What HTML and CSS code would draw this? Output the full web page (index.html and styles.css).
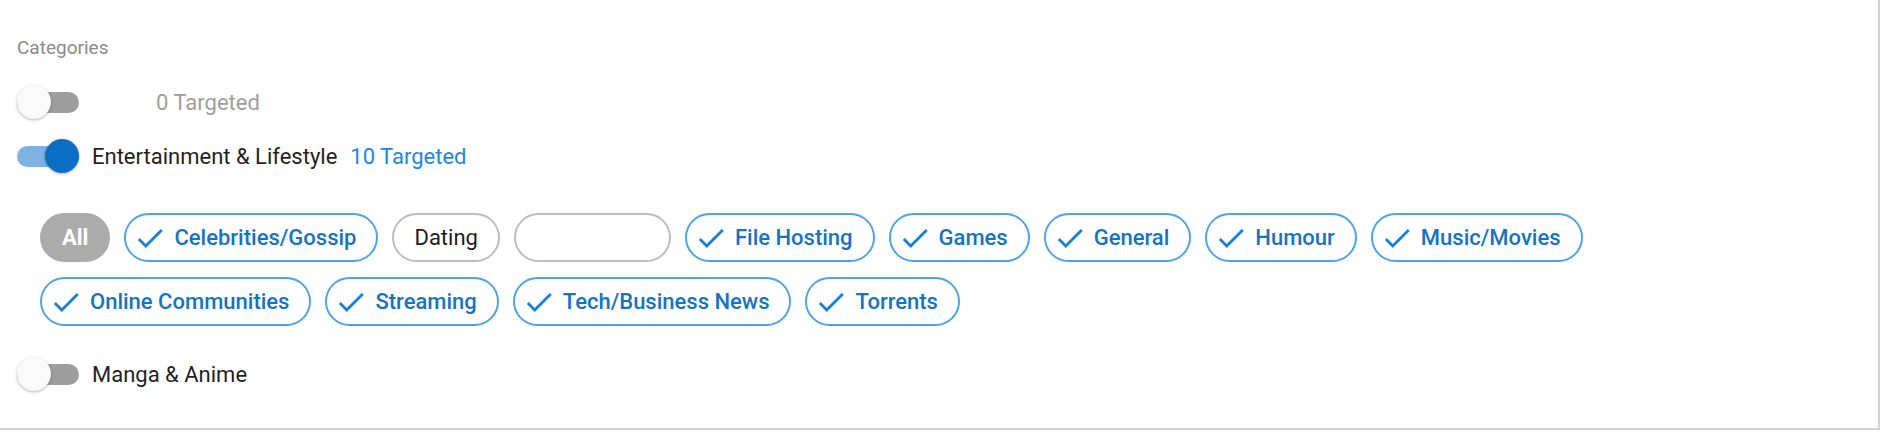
FILE: index.html
```html
<!DOCTYPE html>
<html lang="en">
<head>
    <meta charset="UTF-8">
    <meta name="viewport" content="width=device-width, initial-scale=1.0">
    <title>Categories</title>
    <link rel="stylesheet" href="styles.css">
</head>
<body>
    <div class="panel">
        <div class="caption">Categories</div>

        <div class="category">
            <span class="switch"><span class="thumb"></span></span>
            <span class="name name-empty"></span>
            <span class="count">0 Targeted</span>
        </div>

        <div class="category">
            <span class="switch on"><span class="thumb"></span></span>
            <span class="name">Entertainment &amp; Lifestyle</span>
            <span class="count active">10 Targeted</span>
        </div>

        <div class="chips">
            <span class="chip chip-all">All</span>
            <span class="chip checked"><svg viewBox="0 0 24 24"><path d="M9 16.17L4.83 12l-1.42 1.41L9 19 21 7l-1.41-1.41z"/></svg>Celebrities/Gossip</span>
            <span class="chip">Dating</span>
            <span class="chip chip-empty"></span>
            <span class="chip checked"><svg viewBox="0 0 24 24"><path d="M9 16.17L4.83 12l-1.42 1.41L9 19 21 7l-1.41-1.41z"/></svg>File Hosting</span>
            <span class="chip checked"><svg viewBox="0 0 24 24"><path d="M9 16.17L4.83 12l-1.42 1.41L9 19 21 7l-1.41-1.41z"/></svg>Games</span>
            <span class="chip checked"><svg viewBox="0 0 24 24"><path d="M9 16.17L4.83 12l-1.42 1.41L9 19 21 7l-1.41-1.41z"/></svg>General</span>
            <span class="chip checked"><svg viewBox="0 0 24 24"><path d="M9 16.17L4.83 12l-1.42 1.41L9 19 21 7l-1.41-1.41z"/></svg>Humour</span>
            <span class="chip checked"><svg viewBox="0 0 24 24"><path d="M9 16.17L4.83 12l-1.42 1.41L9 19 21 7l-1.41-1.41z"/></svg>Music/Movies</span>
            <span class="chip checked"><svg viewBox="0 0 24 24"><path d="M9 16.17L4.83 12l-1.42 1.41L9 19 21 7l-1.41-1.41z"/></svg>Online Communities</span>
            <span class="chip checked"><svg viewBox="0 0 24 24"><path d="M9 16.17L4.83 12l-1.42 1.41L9 19 21 7l-1.41-1.41z"/></svg>Streaming</span>
            <span class="chip checked"><svg viewBox="0 0 24 24"><path d="M9 16.17L4.83 12l-1.42 1.41L9 19 21 7l-1.41-1.41z"/></svg>Tech/Business News</span>
            <span class="chip checked"><svg viewBox="0 0 24 24"><path d="M9 16.17L4.83 12l-1.42 1.41L9 19 21 7l-1.41-1.41z"/></svg>Torrents</span>
        </div>

        <div class="category last">
            <span class="switch"><span class="thumb"></span></span>
            <span class="name">Manga &amp; Anime</span>
        </div>
    </div>
</body>
</html>
```

FILE: styles.css
```css
body {
    margin: 0;
    padding: 0;
    background: #fff;
    font-family: Roboto, 'Liberation Sans', sans-serif;
}

.panel {
    width: 1880px;
    height: 430px;
    box-sizing: border-box;
    padding: 36px 0 0 17px;
    border-right: 2px solid #d2d2d2;
    border-bottom: 2px solid #d2d2d2;
}

.caption {
    font-size: 19px;
    line-height: 24px;
    color: #8a8a8a;
    margin-bottom: 22px;
}

.category {
    display: flex;
    align-items: center;
    height: 40px;
    gap: 13px;
    margin-bottom: 14px;
    font-size: 22px;
}

.category.last {
    margin-top: 28px;
}

.switch {
    position: relative;
    display: flex;
    align-items: center;
    width: 62px;
    height: 40px;
}

.switch::before {
    content: '';
    width: 62px;
    height: 21px;
    border-radius: 11px;
    background: #9e9e9e;
}

.switch .thumb {
    position: absolute;
    top: 3px;
    left: 0;
    width: 34px;
    height: 34px;
    border-radius: 50%;
    background: #fafafa;
    box-shadow: 0 1px 3px rgba(0, 0, 0, 0.3);
}

.switch.on::before {
    background: #7db2e2;
}

.switch.on .thumb {
    left: 28px;
    background: #0a6fc2;
}

.name {
    color: #1f1f1f;
}

.name-empty {
    width: 51px;
}

.count {
    color: #9e9e9e;
}

.count.active {
    color: #1a88e0;
}

.chips {
    display: flex;
    flex-wrap: wrap;
    gap: 15px 14px;
    width: 1580px;
    padding-left: 23px;
    margin-top: 37px;
}

.chip {
    display: inline-flex;
    align-items: center;
    box-sizing: border-box;
    height: 49px;
    padding: 0 20px;
    border: 2px solid #bdbdbd;
    border-radius: 25px;
    font-size: 22px;
    color: #1c1c1c;
}

.chip-all {
    background: #ababab;
    border-color: #ababab;
    color: #fff;
    font-weight: bold;
}

.chip-empty {
    width: 157px;
}

.chip.checked {
    border-color: #4ea4e8;
    color: #1573c4;
    font-weight: 500;
    padding-left: 7px;
    gap: 7px;
}

.chip svg {
    width: 34px;
    height: 34px;
    fill: #1a7fd6;
}
```
